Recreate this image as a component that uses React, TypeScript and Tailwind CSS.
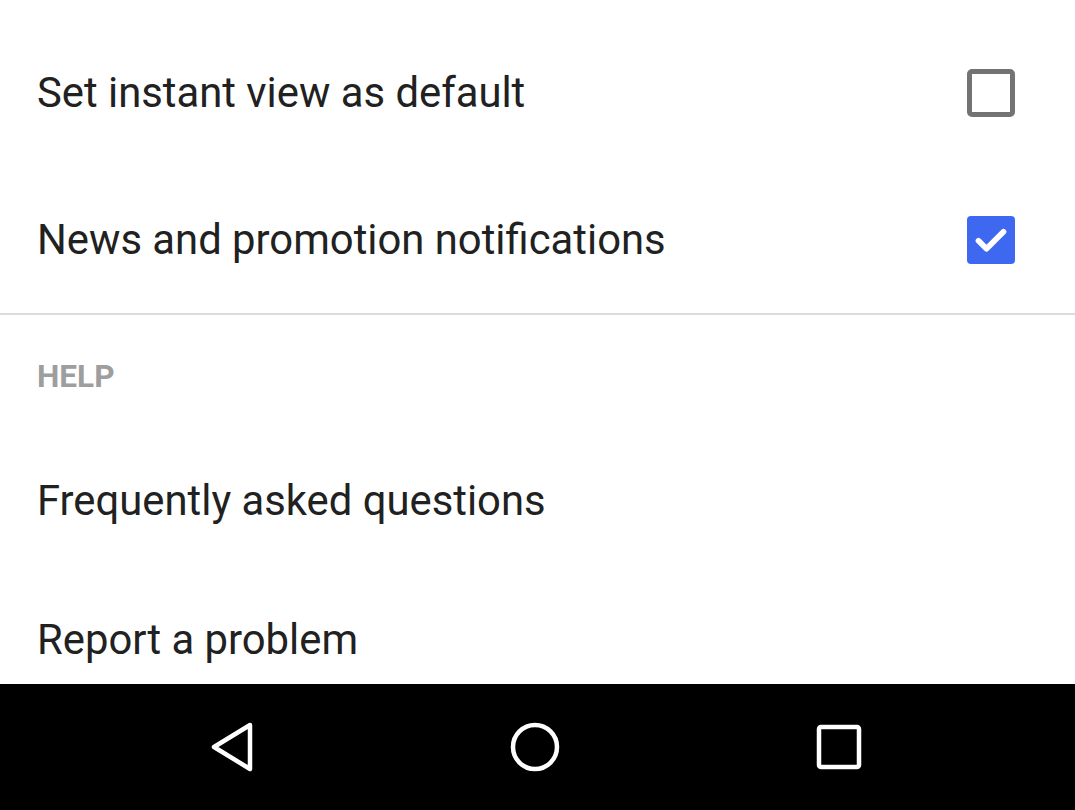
import React from "react";

function Row({ label, checked, h }: { label: string; checked?: boolean | null; h: string }) {
  return (
    <div className={`flex items-center justify-between pl-[37px] pr-[60px] ${h}`}>
      <span className="text-[41.8px] leading-none text-[#212121]">{label}</span>
      {checked === true && (
        <div className="w-[48px] h-[48px] rounded-[4px] bg-[#3f68f0] flex items-center justify-center">
          <svg width="40" height="40" viewBox="0 0 24 24" fill="none">
            <path d="M4.5 12.5l4.8 4.8L19.5 7" stroke="white" strokeWidth="3.4" strokeLinecap="round" strokeLinejoin="round" />
          </svg>
        </div>
      )}
      {checked === false && (
        <div className="w-[48px] h-[48px] rounded-[5px] border-[5px] border-[#737373] bg-white" />
      )}
    </div>
  );
}

export default function App() {
  return (
    <div className="w-[1075px] h-[810px] bg-white flex flex-col overflow-hidden" style={{ fontFamily: "Roboto, 'Noto Sans', sans-serif" }}>
      <div className="h-[684px] overflow-hidden flex flex-col">
        <div className="h-[19px] shrink-0" />
        <Row label="Set instant view as default" checked={false} h="h-[147px] shrink-0" />
        <Row label="News and promotion notifications" checked={true} h="h-[147px] shrink-0" />
        <div className="h-[2px] bg-[#dcdcdc] shrink-0" />
        <div className="h-[124px] shrink-0 flex items-center pl-[37px]">
          <span className="text-[31.6px] font-bold text-[#9e9e9e] leading-none">HELP</span>
        </div>
        <Row label="Frequently asked questions" h="h-[124px] shrink-0" />
        <Row label="Report a problem" h="h-[154px] shrink-0" />
      </div>
      <div className="h-[126px] bg-black flex items-center justify-center gap-[254px] pr-[4px]">
        <svg width="46" height="52" viewBox="0 0 46 52" fill="none">
          <path d="M41 4L5 26l36 22z" stroke="white" strokeWidth="4.5" strokeLinejoin="round" />
        </svg>
        <svg width="52" height="52" viewBox="0 0 52 52" fill="none">
          <circle cx="26" cy="26" r="22" stroke="white" strokeWidth="4.5" />
        </svg>
        <svg width="48" height="48" viewBox="0 0 48 48" fill="none">
          <rect x="4" y="4" width="40" height="40" rx="2" stroke="white" strokeWidth="4.5" />
        </svg>
      </div>
    </div>
  );
}
